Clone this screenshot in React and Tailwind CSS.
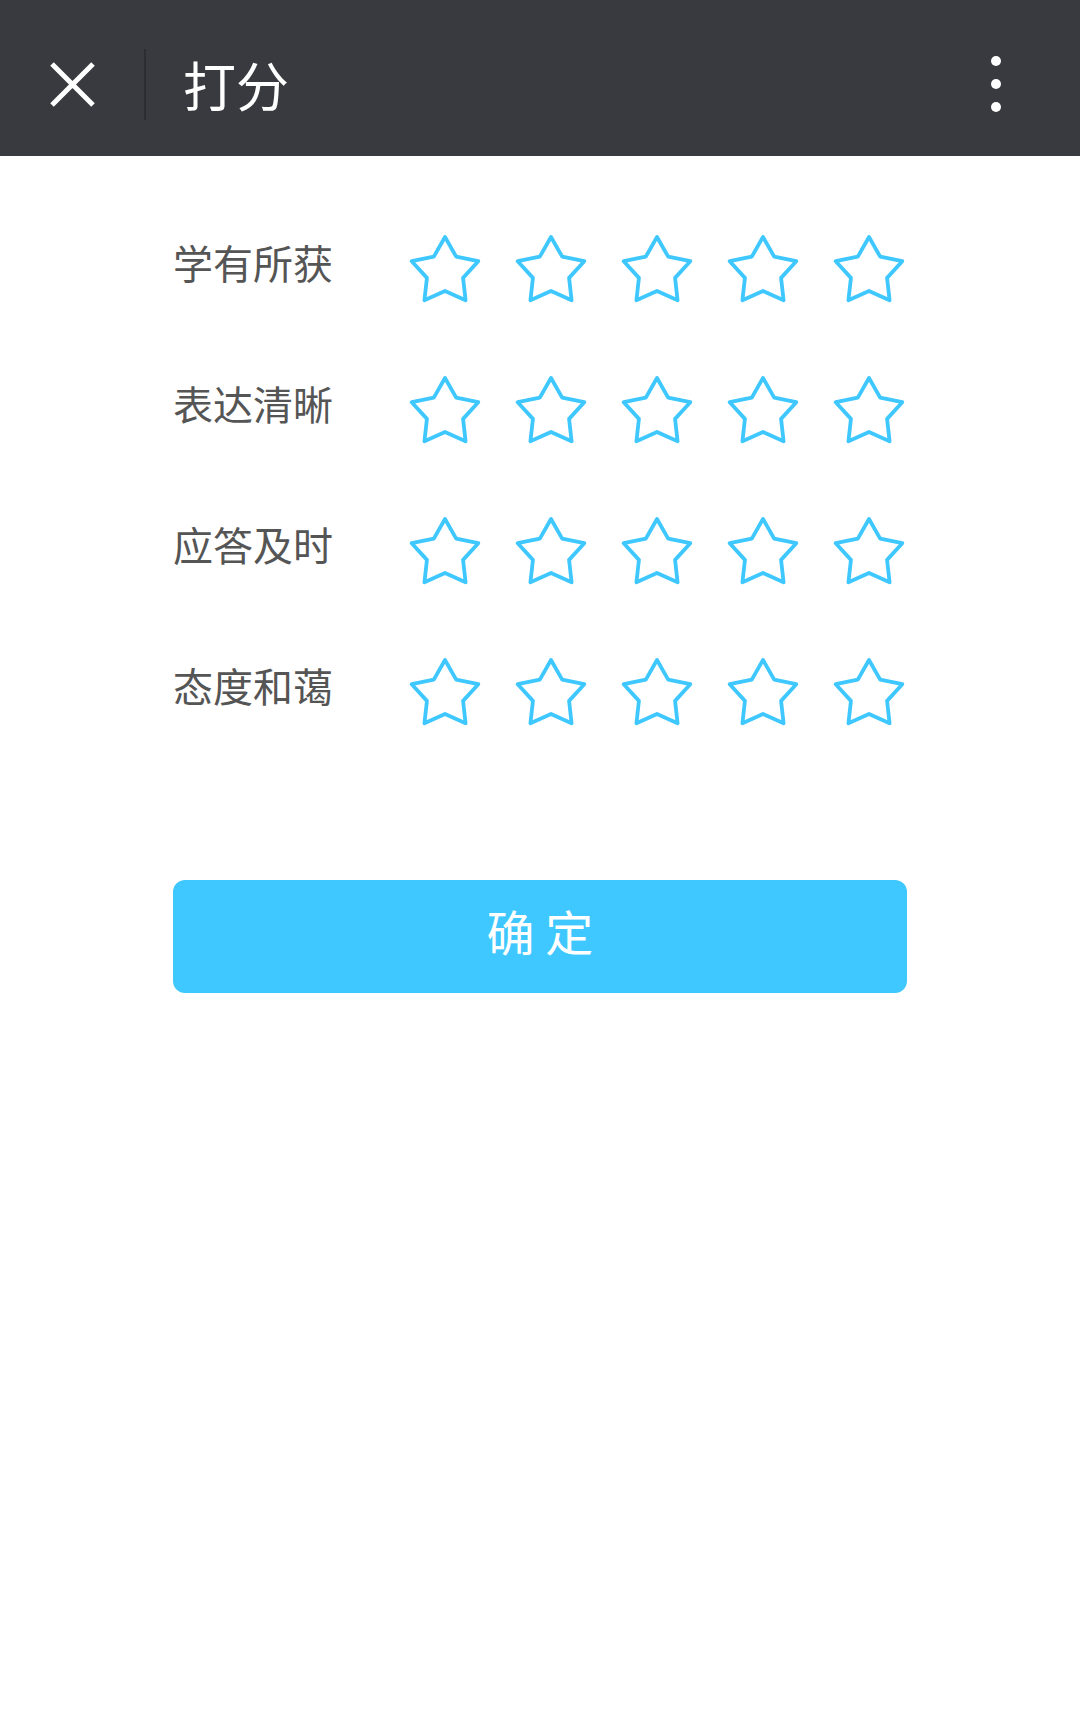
import React, { useState } from 'react';

const items = ['学有所获', '表达清晰', '应答及时', '态度和蔼'];

// outline star, points computed once
const starPoints = Array.from({ length: 10 }, (_, k) => {
  const a = ((-90 + 36 * k) * Math.PI) / 180;
  const r = k % 2 === 0 ? 35 : 19;
  return `${(40 + r * Math.cos(a)).toFixed(2)},${(40 + r * Math.sin(a)).toFixed(2)}`;
}).join(' ');

function Star({ filled, onClick }) {
  return (
    <svg
      width="76"
      height="72"
      viewBox="2 3 76 72"
      onClick={onClick}
      className="cursor-pointer"
    >
      <polygon
        points={starPoints}
        fill={filled ? '#3fc8ff' : 'none'}
        stroke="#3fc8ff"
        strokeWidth="3.8"
        strokeLinejoin="round"
      />
    </svg>
  );
}

export default function App() {
  const [scores, setScores] = useState([0, 0, 0, 0]);

  const setScore = (row, val) => {
    setScores(prev => prev.map((s, i) => (i === row ? val : s)));
  };

  return (
    <div
      className="min-h-[1732px] bg-white"
      style={{ fontFamily: '"Noto Sans CJK SC", "Noto Sans", sans-serif' }}
    >
      {/* top bar */}
      <div className="h-[156px] bg-[#393a3f] flex items-center pt-[12px] pl-[49px] pr-[79px]">
        <svg width="47" height="47" viewBox="0 0 47 47">
          <path d="M3 3 L44 44 M44 3 L3 44" stroke="#fff" strokeWidth="5" />
        </svg>
        <div className="ml-[48px] w-[2px] h-[71px] bg-[#2c2d31]" />
        <div className="ml-[37px] text-white text-[53px] leading-none">打分</div>
        <div className="ml-auto flex flex-col gap-[13px]">
          <span className="block w-[10px] h-[10px] rounded-full bg-white" />
          <span className="block w-[10px] h-[10px] rounded-full bg-white" />
          <span className="block w-[10px] h-[10px] rounded-full bg-white" />
        </div>
      </div>

      {/* ratings */}
      <div className="w-[734px] mx-auto pt-[44px]">
        {items.map((label, row) => (
          <div key={label} className="h-[141px] flex items-center">
            <div className="w-[234px] pb-[17px] text-[40px] leading-none text-[#555555]">
              {label}
            </div>
            <div className="flex-1 flex justify-between">
              {[1, 2, 3, 4, 5].map(n => (
                <Star
                  key={n}
                  filled={scores[row] >= n}
                  onClick={() => setScore(row, n)}
                />
              ))}
            </div>
          </div>
        ))}

        <button
          type="button"
          className="mt-[116px] w-full h-[113px] pb-[14px] rounded-[12px] bg-[#3fc8ff] text-white text-[48px] leading-none"
        >
          确 定
        </button>
      </div>
    </div>
  );
}
